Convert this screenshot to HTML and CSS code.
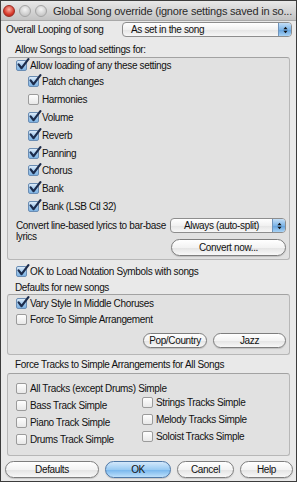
FILE: index.html
```html
<!DOCTYPE html>
<html lang="en">
<head>
  <meta charset="UTF-8" />
  <title>Global Song override</title>
  <link rel="stylesheet" href="styles.css">
</head>
<body>
  <svg width="0" height="0" class="defs">
    <symbol id="tick" viewBox="0 0 14 13">
      <path d="M2.6 6.4 L5.6 10.2 L12.4 1.2" fill="none" stroke="#1c2c4c" stroke-width="2.2" stroke-linecap="round" stroke-linejoin="round"/>
    </symbol>
    <symbol id="updown" viewBox="0 0 8 12">
      <path d="M1.5 5 L4 2 L6.5 5 Z M1.5 7 L4 10 L6.5 7 Z" fill="#111"/>
    </symbol>
  </svg>

  <div class="window">
    <div class="titlebar">
      <span class="lights">
        <i class="light red"></i>
        <i class="light"></i>
        <i class="light"></i>
      </span>
      <span class="title">Global Song override (ignore settings saved in so...</span>
    </div>

    <div class="content">
      <div class="loop-row">
        <span class="loop-label">Overall Looping of song</span>
        <div class="popup popup-loop">
          <span class="popup-text">As set in the song</span>
          <span class="stepper"><svg><use href="#updown"/></svg></span>
        </div>
      </div>

      <div class="caption">Allow Songs to load settings for:</div>
      <div class="group group-load">
        <div class="check first on"><span class="box"><svg><use href="#tick"/></svg></span>Allow loading of any these settings</div>
        <div class="sub">
          <div class="check on"><span class="box"><svg><use href="#tick"/></svg></span>Patch changes</div>
          <div class="check"><span class="box"></span>Harmonies</div>
          <div class="check on"><span class="box"><svg><use href="#tick"/></svg></span>Volume</div>
          <div class="check on"><span class="box"><svg><use href="#tick"/></svg></span>Reverb</div>
          <div class="check on"><span class="box"><svg><use href="#tick"/></svg></span>Panning</div>
          <div class="check on"><span class="box"><svg><use href="#tick"/></svg></span>Chorus</div>
          <div class="check on"><span class="box"><svg><use href="#tick"/></svg></span>Bank</div>
          <div class="check on"><span class="box"><svg><use href="#tick"/></svg></span>Bank (LSB Ctl 32)</div>
        </div>
        <div class="lyrics-row">
          <div class="lyrics-label">Convert line-based lyrics to bar-base lyrics</div>
          <div class="lyrics-controls">
            <div class="popup popup-lyrics">
              <span class="popup-text">Always (auto-split)</span>
              <span class="stepper"><svg><use href="#updown"/></svg></span>
            </div>
            <button class="btn btn-convert">Convert now...</button>
          </div>
        </div>
      </div>

      <div class="check top-check on"><span class="box"><svg><use href="#tick"/></svg></span>OK to Load Notation Symbols with songs</div>

      <div class="caption caption-defaults">Defaults for new songs</div>
      <div class="group group-defaults">
        <div class="check on"><span class="box"><svg><use href="#tick"/></svg></span>Vary Style In Middle Choruses</div>
        <div class="check"><span class="box"></span>Force To Simple Arrangement</div>
        <div class="style-buttons">
          <button class="btn btn-pop">Pop/Country</button>
          <button class="btn btn-jazz">Jazz</button>
        </div>
      </div>

      <div class="caption caption-tracks">Force Tracks to Simple Arrangements for All Songs</div>
      <div class="group group-tracks">
        <div class="check"><span class="box"></span>All Tracks (except Drums) Simple</div>
        <div class="track-cols">
          <div class="track-col">
            <div class="check"><span class="box"></span>Bass Track Simple</div>
            <div class="check"><span class="box"></span>Piano Track Simple</div>
            <div class="check"><span class="box"></span>Drums Track Simple</div>
          </div>
          <div class="track-col right">
            <div class="check"><span class="box"></span>Strings Tracks Simple</div>
            <div class="check"><span class="box"></span>Melody Tracks Simple</div>
            <div class="check"><span class="box"></span>Soloist Tracks Simple</div>
          </div>
        </div>
      </div>

      <div class="dialog-buttons">
        <button class="btn btn-defaults">Defaults</button>
        <button class="btn btn-ok">OK</button>
        <button class="btn btn-cancel">Cancel</button>
        <button class="btn btn-help">Help</button>
      </div>
    </div>
  </div>
</body>
</html>
```

FILE: styles.css
```css
:root {
  --win-bg: #e9e9e9;
  --group-bg: #e1e1e1;
  --group-border: #b7b7b7;
  --text: #111;
}

body {
  margin: 0;
  font-family: 'Liberation Sans', Arial, sans-serif;
  font-size: 10px;
  letter-spacing: -0.35px;
  color: var(--text);
}

.defs {
  position: absolute;
}

.window {
  width: 297px;
  height: 482px;
  box-sizing: border-box;
  border: 1px solid #3c3c3c;
  background: var(--win-bg);
  overflow: hidden;
}

/* title bar */
.titlebar {
  height: 20px;
  display: flex;
  align-items: center;
  background: linear-gradient(to bottom, #e8e8e8, #c3c3c3);
  border-bottom: 1px solid #a8a8a8;
  box-sizing: border-box;
}

.lights {
  display: flex;
  gap: 4px;
  margin-left: 2px;
}

.light {
  width: 12px;
  height: 12px;
  border-radius: 50%;
  box-sizing: border-box;
  border: 1px solid #a4a4a4;
  background: radial-gradient(circle at 50% 35%, #f4f4f4, #c9c9c9 70%);
}

.light.red {
  border-color: #9a2a22;
  background: radial-gradient(circle at 50% 35%, #f9b0a4, #d8392b 60%, #a5201a);
}

.title {
  margin-left: 6px;
  font-size: 11px;
  letter-spacing: -0.2px;
  color: #2a2a2a;
  white-space: nowrap;
}

.content {
  padding: 0 6px;
}

/* first row */
.loop-row {
  display: flex;
  align-items: center;
  height: 17px;
  margin-top: 0;
}

.loop-label {
  margin-left: -1px;
  width: 116px;
}

.popup {
  display: flex;
  align-items: center;
  height: 15px;
  box-sizing: border-box;
  border: 1px solid #8d8d8d;
  border-radius: 4px;
  background: linear-gradient(to bottom, #ffffff, #f1f1f1 50%, #e4e4e4 51%, #f7f7f7);
  padding-left: 8px;
  overflow: hidden;
}

.popup-text {
  flex: 1;
  white-space: nowrap;
}

.popup-loop {
  width: 170px;
  margin-right: -3px;
}

.stepper {
  width: 12px;
  height: 100%;
  display: flex;
  align-items: center;
  justify-content: center;
  background: linear-gradient(to bottom, #c3def6, #7fb6e8 50%, #5f9fdc 51%, #a9d3f5);
  border-left: 1px solid #6f93ba;
}

.stepper svg {
  width: 7px;
  height: 10px;
}

/* captions and groups */
.caption {
  height: 13px;
  line-height: 13px;
  padding-left: 8px;
  margin-top: 5px;
}

.group {
  background: var(--group-bg);
  border: 1px solid var(--group-border);
  border-top-color: #a2a2a2;
  border-radius: 3px;
  padding: 0 3px 0 8px;
}

/* checkboxes */
.check {
  display: flex;
  align-items: center;
  height: 17.8px;
  white-space: nowrap;
}

.box {
  position: relative;
  width: 11px;
  height: 11px;
  box-sizing: border-box;
  flex: none;
  margin-right: 3px;
  border: 1px solid #9b9b9b;
  border-radius: 2px;
  background: linear-gradient(to bottom, #fefefe, #e8e8e8);
}

.check.on .box {
  border-color: #6a8db4;
  background: linear-gradient(to bottom, #dcebf9, #9cc6ec 55%, #7fb3e3);
}

.box svg {
  position: absolute;
  left: -1px;
  top: -3px;
  width: 14px;
  height: 13px;
}

.group-load {
  margin-top: 1px;
}

.check.first {
  height: 15px;
}

.sub {
  padding-left: 12px;
}

.lyrics-row {
  display: flex;
  justify-content: space-between;
  margin-top: 3px;
  padding-bottom: 3px;
}

.lyrics-label {
  width: 150px;
  line-height: 11px;
  margin-top: 2px;
}

.lyrics-controls {
  display: flex;
  flex-direction: column;
  gap: 6px;
  width: 116px;
}

.popup-lyrics {
  padding-left: 13px;
}

/* buttons */
.btn {
  font: inherit;
  letter-spacing: inherit;
  color: var(--text);
  height: 17px;
  padding: 0;
  border: 1px solid #7e7e7e;
  border-radius: 9px;
  background: linear-gradient(to bottom, #ffffff, #f3f3f3 50%, #e3e3e3 51%, #f8f8f8);
  box-shadow: 0 1px 1px rgba(0, 0, 0, 0.15);
}

.btn-convert {
  width: 115px;
  margin-left: 1px;
}

.top-check {
  padding-left: 9px;
  margin-top: 2px;
  height: 18px;
}

.caption-defaults {
  margin-top: 1px;
}

.group-defaults .check {
  height: 16px;
}

.group-defaults {
  padding-bottom: 6px;
}

.style-buttons {
  display: flex;
  justify-content: flex-end;
  gap: 6px;
  margin-top: 6px;
}

.btn-pop {
  width: 64px;
  height: 15px;
}

.btn-jazz {
  width: 73px;
  height: 15px;
}

.caption-tracks {
  margin-top: 3px;
}

.group-tracks {
  margin-top: 2px;
  padding-top: 6px;
  padding-bottom: 7px;
}

.group-tracks .check {
  height: 17px;
}

.track-cols {
  display: grid;
  grid-template-columns: 126px 1fr;
}

.track-col.right {
  margin-top: -3px;
}

.dialog-buttons {
  display: flex;
  gap: 6px;
  margin: 5px -5px 0 -2px;
}

.btn-defaults {
  width: 94px;
}

.btn-ok {
  width: 66px;
  border-color: #4f78a6;
  background: linear-gradient(to bottom, #d3e8fb, #9acbf3 50%, #74b4ec 51%, #bde0fb);
}

.btn-cancel {
  width: 57px;
}

.btn-help {
  width: 53px;
}
```
